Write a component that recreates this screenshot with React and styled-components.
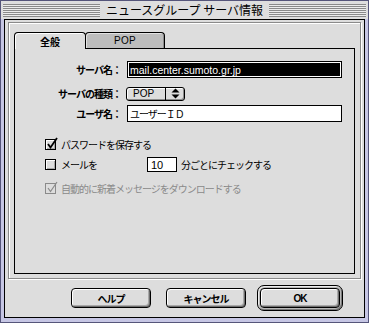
import React from 'react';
import styled, { createGlobalStyle } from 'styled-components';

const Global = createGlobalStyle`
  * { box-sizing: border-box; }
  html, body { margin: 0; padding: 0; background: #c8c8e0; }
  body {
    font-family: "Liberation Sans", "Noto Sans CJK JP", sans-serif;
    font-size: 10px;
    color: #000;
  }
  #root { width: 369px; height: 323px; }
`;

const Window = styled.div`
  width: 369px;
  height: 323px;
  border: 1px solid #55557a;
  background: #c6c6e4;
  display: flex;
  flex-direction: column;
  padding: 0 3px 4px 3px;
`;

const TitleBar = styled.div`
  height: 18px;
  margin: 0 -3px;
  padding: 0 2px;
  background: #dedede;
  display: flex;
  align-items: center;
`;

const Stripes = styled.div`
  flex: 1;
  height: 13px;
  background: repeating-linear-gradient(
    to bottom,
    #8a8a8a 0px,
    #8a8a8a 1px,
    #ececec 1px,
    #ececec 2px
  );
`;

const TitleText = styled.div`
  padding: 0 6px;
  font-family: "Noto Sans CJK JP", sans-serif;
  font-size: 12px;
  line-height: 18px;
  white-space: nowrap;
`;

const Body = styled.div`
  flex: 1;
  border: 1px solid #000;
  background: #dddddd;
  display: flex;
  flex-direction: column;
  padding: 2px 2px 0 3px;
`;

const Group = styled.div`
  width: 353px;
  height: 257px;
  border: 1px solid #8a8a8a;
  box-shadow: inset 1px 1px 0 #fff, 1px 1px 0 #fff;
  padding: 9px 5px 4px 5px;
  display: flex;
  flex-direction: column;
`;

const TabRow = styled.div`
  height: 16px;
  display: flex;
  align-items: flex-start;
`;

const Tab = styled.div`
  position: relative;
  z-index: ${p => (p.$active ? 2 : 1)};
  width: ${p => p.$w}px;
  height: ${p => (p.$active ? 17 : 16)}px;
  margin-left: ${p => p.$ml || 0}px;
  border: 1px solid #000;
  border-bottom: none;
  border-radius: 4px 4px 0 0;
  background: ${p => (p.$active ? '#dddddd' : '#bdbdbd')};
  box-shadow: ${p =>
    p.$active
      ? 'inset 1px 1px 0 #ffffff'
      : 'inset 1px 1px 0 #e2e2e2, inset -1px 0 0 #8c8c8c'};
  display: flex;
  align-items: center;
  justify-content: center;
  font-weight: ${p => (p.$active ? 700 : 400)};
  font-size: 10px;
  letter-spacing: ${p => (p.$active ? '0' : '0.3px')};
`;

const Panel = styled.div`
  flex: 1;
  border: 1px solid #000;
  background: #dddddd;
  display: flex;
  flex-direction: column;
`;

const FieldRow = styled.div`
  display: grid;
  grid-template-columns: 106px auto;
  column-gap: 6px;
  align-items: center;
  height: ${p => p.$h}px;
  margin-top: ${p => p.$mt}px;
`;

const Label = styled.div`
  text-align: right;
  font-weight: 700;
  font-size: 10px;
  letter-spacing: -1px;
  white-space: nowrap;
`;

const TextField = styled.div`
  width: 215px;
  height: 17px;
  border: 1px solid #000;
  background: ${p => (p.$selected ? '#000' : '#fff')};
  color: ${p => (p.$selected ? '#fff' : '#000')};
  box-shadow: inset 0 0 0 1px #fff;
  padding-left: 2px;
  display: flex;
  align-items: center;
  font-size: ${p => (p.$jp ? 10 : 10.5)}px;
  letter-spacing: ${p => (p.$jp ? '-1px' : '0')};
  white-space: nowrap;
`;

const Popup = styled.div`
  width: 59px;
  height: 14px;
  margin-left: -1px;
  border: 1px solid #000;
  border-radius: 3px;
  background: #dddddd;
  box-shadow: inset 1px 1px 0 #fff, inset -1px -1px 0 #8c8c8c;
  display: flex;
  align-items: stretch;
`;

const PopupText = styled.div`
  flex: 1;
  padding-left: 6px;
  display: flex;
  align-items: center;
  font-size: 10px;
`;

const PopupArrow = styled.div`
  width: 19px;
  border-left: 1px solid #000;
  display: flex;
  align-items: center;
  justify-content: center;
`;

const CheckRow = styled.div`
  display: flex;
  align-items: center;
  height: 15px;
  margin-top: ${p => p.$mt}px;
  padding-left: 30px;
  color: ${p => (p.$disabled ? '#8a8a8a' : '#000')};
`;

const Box = styled.div`
  position: relative;
  width: 11px;
  height: 11px;
  border: 1px solid ${p => (p.$disabled ? '#8a8a8a' : '#000')};
  background: #dddddd;
  box-shadow: ${p => (p.$disabled ? 'none' : 'inset 1px 1px 0 #fff, inset -1px -1px 0 #a8a8a8')};
  margin-right: 5px;
  flex: none;
`;

const CheckMark = styled.svg`
  position: absolute;
  left: 0px;
  top: -3px;
`;

const CheckText = styled.span`
  font-size: 10px;
  letter-spacing: -1px;
  white-space: nowrap;
  width: ${p => (p.$w ? `${p.$w}px` : 'auto')};
`;

const NumField = styled.div`
  width: 30px;
  height: 15px;
  border: 1px solid #000;
  background: #fff;
  padding-left: 3px;
  display: flex;
  align-items: center;
  font-size: 11px;
  margin-right: 4px;
`;

const ButtonRow = styled.div`
  flex: 1;
  display: flex;
  align-items: center;
  justify-content: flex-end;
  padding-right: 19px;
`;

const Button = styled.div`
  width: 80px;
  height: 20px;
  margin-left: ${p => p.$ml || 0}px;
  border: 1px solid #000;
  border-radius: 4px;
  background: #dddddd;
  box-shadow: inset 1px 1px 0 #fff, inset -1px -1px 0 #6e6e6e, inset -2px -2px 0 #a8a8a8;
  display: flex;
  align-items: center;
  justify-content: center;
  font-weight: 700;
  font-size: 10px;
  letter-spacing: -1px;
`;

const DefaultRing = styled.div`
  margin-left: ${p => p.$ml || 0}px;
  border: 1px solid #000;
  border-radius: 7px;
  padding: 2px;
  background: #b8b8b8;
  box-shadow: inset 1px 1px 0 #ececec, inset -1px -1px 0 #7a7a7a;
  display: flex;
`;

function Check({ disabled, checked }) {
  const c = disabled ? '#8a8a8a' : '#000';
  return (
    <Box $disabled={disabled}>
      {checked && (
        <CheckMark width="13" height="13" viewBox="0 0 13 13">
          <polyline
            points="2,7 4.5,10.5 11,1"
            fill="none"
            stroke={c}
            strokeWidth={disabled ? 1.2 : 1.8}
          />
        </CheckMark>
      )}
    </Box>
  );
}

export default function App() {
  return (
    <>
      <Global />
      <Window>
        <TitleBar>
          <Stripes />
          <TitleText>ニュースグループ サーバ情報</TitleText>
          <Stripes />
        </TitleBar>
        <Body>
          <Group>
            <TabRow>
              <Tab $active $w={72}>全般</Tab>
              <Tab $w={80} $ml={-1}>POP</Tab>
            </TabRow>
            <Panel>
              <FieldRow $h={17} $mt={12}>
                <Label>サーバ名：</Label>
                <TextField $selected>mail.center.sumoto.gr.jp</TextField>
              </FieldRow>
              <FieldRow $h={14} $mt={8}>
                <Label>サーバの種類：</Label>
                <Popup>
                  <PopupText>POP</PopupText>
                  <PopupArrow>
                    <svg width="9" height="11" viewBox="0 0 9 11">
                      <polygon points="4.5,0.5 8.5,4.5 0.5,4.5" fill="#000" />
                      <polygon points="0.5,6.5 8.5,6.5 4.5,10.5" fill="#000" />
                    </svg>
                  </PopupArrow>
                </Popup>
              </FieldRow>
              <FieldRow $h={17} $mt={5}>
                <Label>ユーザ名：</Label>
                <TextField $jp>ユーザーＩＤ</TextField>
              </FieldRow>

              <CheckRow $mt={15}>
                <Check checked />
                <CheckText>パスワードを保存する</CheckText>
              </CheckRow>
              <CheckRow $mt={5}>
                <Check />
                <CheckText $w={86}>メールを</CheckText>
                <NumField>10</NumField>
                <CheckText>分ごとにチェックする</CheckText>
              </CheckRow>
              <CheckRow $mt={9} $disabled>
                <Check checked disabled />
                <CheckText>自動的に新着メッセージをダウンロードする</CheckText>
              </CheckRow>
            </Panel>
          </Group>
          <ButtonRow>
            <Button>ヘルプ</Button>
            <Button $ml={15}>キャンセル</Button>
            <DefaultRing $ml={11}>
              <Button>OK</Button>
            </DefaultRing>
          </ButtonRow>
        </Body>
      </Window>
    </>
  );
}
